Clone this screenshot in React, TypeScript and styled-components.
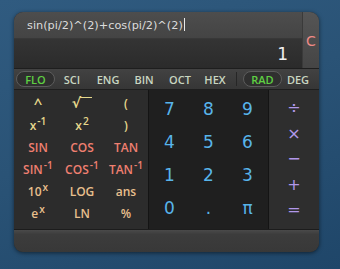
import React from "react";
import styled, { createGlobalStyle } from "styled-components";

const GlobalStyle = createGlobalStyle`
  html, body {
    margin: 0;
    padding: 0;
  }
  body {
    width: 340px;
    height: 269px;
    overflow: hidden;
    background: linear-gradient(160deg, #305b80 0%, #2a5376 45%, #1f4669 100%);
    font-family: "DejaVu Sans", sans-serif;
  }
`;

const Widget = styled.div`
  margin: 12px 0 0 14px;
  width: 305px;
  border-radius: 9px;
  overflow: hidden;
  background: #2a2a2a;
  box-shadow: 0 1px 4px rgba(0, 0, 0, 0.55);
`;

const Display = styled.div`
  display: grid;
  grid-template-columns: 1fr 17px;
  height: 56px;
`;

const Lines = styled.div`
  display: flex;
  flex-direction: column;
`;

const ExprRow = styled.div`
  height: 27px;
  box-sizing: border-box;
  padding: 6px 0 0 13px;
  background: linear-gradient(#4d4d4d, #444444);
  border-bottom: 1px solid #383838;
  color: #dcdcdc;
  font-size: 11.3px;
  white-space: nowrap;
`;

const Caret = styled.span`
  display: inline-block;
  width: 1px;
  height: 13px;
  margin-left: 1px;
  vertical-align: -2px;
  background: #e8e8e8;
`;

const ResultRow = styled.div`
  flex: 1;
  display: flex;
  align-items: flex-end;
  justify-content: flex-end;
  padding: 0 14px 4px 0;
  background: linear-gradient(#343434, #2b2b2b);
  color: #f0f0f0;
  font-size: 17px;
`;

const ClearCol = styled.div`
  display: flex;
  align-items: center;
  justify-content: center;
  padding-top: 2px;
  background: linear-gradient(#555555, #454545);
  border-left: 1px solid #3a3a3a;
  color: #f08a86;
  font-size: 14px;
`;

const ModeBar = styled.div`
  display: flex;
  align-items: center;
  height: 20px;
  padding-left: 2px;
  background: linear-gradient(#424242, #363636);
  border-top: 1px solid #1e1e1e;
  border-bottom: 1px solid #1e1e1e;
`;

const Mode = styled.span<{ $on?: boolean; $w: number }>`
  display: flex;
  align-items: center;
  justify-content: center;
  width: ${(p) => p.$w}px;
  height: 14px;
  border-radius: 8px;
  font-family: "Open Sans", sans-serif;
  font-size: 11px;
  font-weight: 600;
  color: ${(p) => (p.$on ? "#5fd043" : "#c9d6c1")};
  background: ${(p) => (p.$on ? "#2f2f2f" : "transparent")};
  border: 1px solid ${(p) => (p.$on ? "#5c5c5c" : "transparent")};
`;

const ModeSep = styled.span`
  width: 1px;
  height: 14px;
  margin: 0 6px 0 6px;
  background: #262626;
`;

const Keypad = styled.div`
  display: flex;
  height: 139px;
`;

const FuncPane = styled.div`
  width: 134px;
  box-sizing: border-box;
  padding: 2px 0 0 2px;
  display: grid;
  grid-template-columns: repeat(3, 44px);
  grid-auto-rows: 22px;
  background: #2c2c2c;
`;

const NumPane = styled.div`
  width: 121px;
  box-sizing: border-box;
  padding: 2px 0 0 1px;
  display: grid;
  grid-template-columns: repeat(3, 39px);
  grid-auto-rows: 33px;
  background: #1f1f1f;
  border-left: 1px solid #141414;
  border-right: 1px solid #141414;
`;

const OpPane = styled.div`
  flex: 1;
  padding-top: 5px;
  display: grid;
  grid-auto-rows: 25.5px;
  background: #2e2e2e;
`;

const Key = styled.span<{ $c: string; $size: number; $weight?: number }>`
  display: flex;
  align-items: center;
  justify-content: center;
  color: ${(p) => p.$c};
  font-size: ${(p) => p.$size}px;
  font-weight: ${(p) => p.$weight ?? 400};
  white-space: nowrap;
`;

const FuncKey = styled(Key)`
  font-family: "Open Sans", sans-serif;

  sup {
    font-size: 0.85em;
    line-height: 0;
    position: relative;
    top: -4px;
    margin-left: 1px;
  }
`;

const Radical = styled.span`
  display: inline-flex;
  align-items: flex-start;
  font-family: "DejaVu Sans", sans-serif;
  font-size: 14px;
  line-height: 1;
`;

const RadicalBar = styled.span`
  width: 12px;
  margin-left: -1px;
  margin-top: 1px;
  border-top: 1.5px solid currentColor;
`;

const Footer = styled.div`
  height: 22px;
  background: linear-gradient(#4a4a4a, #3c3c3c 20%, #383838);
  border-top: 1px solid #1c1c1c;
`;

const YEL = "#e6d88c";
const RED = "#ef7f70";
const TAN = "#e8bf8c";
const BLUE = "#58b4ea";
const PURP = "#b197ea";

const funcKeys: { label: React.ReactNode; c: string; size?: number }[] = [
  { label: "^", c: YEL, size: 15 },
  {
    label: (
      <Radical>
        √<RadicalBar />
      </Radical>
    ),
    c: YEL,
  },
  { label: "(", c: YEL },
  { label: <>x<sup>-1</sup></>, c: YEL },
  { label: <>x<sup>2</sup></>, c: YEL },
  { label: ")", c: YEL },
  { label: "SIN", c: RED },
  { label: "COS", c: RED },
  { label: "TAN", c: RED },
  { label: <>SIN<sup>-1</sup></>, c: RED },
  { label: <>COS<sup>-1</sup></>, c: RED },
  { label: <>TAN<sup>-1</sup></>, c: RED },
  { label: <>10<sup>x</sup></>, c: TAN },
  { label: "LOG", c: TAN },
  { label: "ans", c: TAN },
  { label: <>e<sup>x</sup></>, c: TAN },
  { label: "LN", c: TAN },
  { label: "%", c: TAN },
];

const numKeys = ["7", "8", "9", "4", "5", "6", "1", "2", "3", "0", ".", "π"];
const opKeys = ["÷", "×", "−", "+", "="];

const modes: { label: string; w: number; gap: number; on?: boolean }[] = [
  { label: "FLO", w: 37, gap: 3, on: true },
  { label: "SCI", w: 26, gap: 6 },
  { label: "ENG", w: 30, gap: 6 },
  { label: "BIN", w: 26, gap: 6 },
  { label: "OCT", w: 30, gap: 4 },
  { label: "HEX", w: 28, gap: 0 },
];

const App: React.FC = () => {
  return (
    <>
      <GlobalStyle />
      <Widget>
        <Display>
          <Lines>
            <ExprRow>
              sin(pi/2)^(2)+cos(pi/2)^(2)
              <Caret />
            </ExprRow>
            <ResultRow>1</ResultRow>
          </Lines>
          <ClearCol>C</ClearCol>
        </Display>
        <ModeBar>
          {modes.map((m) => (
            <Mode key={m.label} $on={m.on} $w={m.w} style={{ marginRight: m.gap }}>
              {m.label}
            </Mode>
          ))}
          <ModeSep />
          <Mode $on $w={37}>RAD</Mode>
          <Mode $w={30}>DEG</Mode>
        </ModeBar>
        <Keypad>
          <FuncPane>
            {funcKeys.map((k, i) => (
              <FuncKey key={i} $c={k.c} $size={k.size ?? 12} $weight={600}>
                {k.label}
              </FuncKey>
            ))}
          </FuncPane>
          <NumPane>
            {numKeys.map((n) => (
              <Key key={n} $c={BLUE} $size={17}>
                {n}
              </Key>
            ))}
          </NumPane>
          <OpPane>
            {opKeys.map((o) => (
              <Key key={o} $c={PURP} $size={16}>
                {o}
              </Key>
            ))}
          </OpPane>
        </Keypad>
        <Footer />
      </Widget>
    </>
  );
};

export default App;
